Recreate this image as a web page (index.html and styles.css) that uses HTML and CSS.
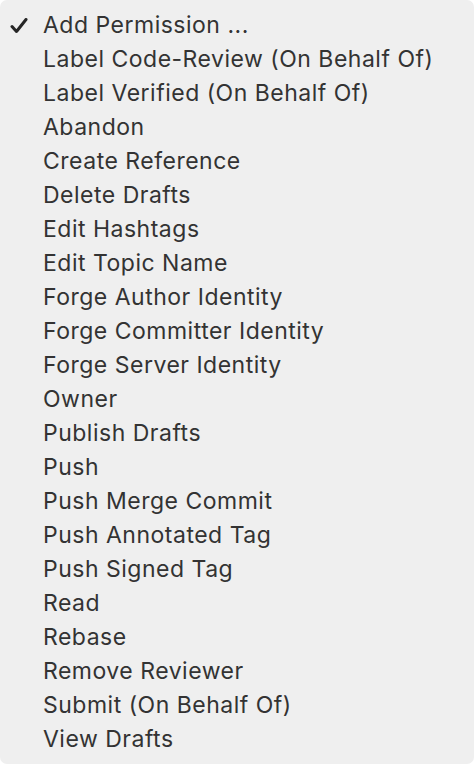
FILE: index.html
```html
<!DOCTYPE html>
<html lang="en">
<head>
  <meta charset="UTF-8">
  <title>Permissions menu</title>
  <link rel="stylesheet" href="styles.css">
</head>
<body>

<ul class="menu">
  <li class="item checked">
    <svg class="check" width="18" height="16" viewBox="0 0 18 16"><path d="M2 8.5 L6.5 13.5 L16 1.5" fill="none" stroke="#262626" stroke-width="3" stroke-linecap="round" stroke-linejoin="round"/></svg>
    Add Permission ...
  </li>
  <li class="item">Label Code-Review (On Behalf Of)</li>
  <li class="item">Label Verified (On Behalf Of)</li>
  <li class="item">Abandon</li>
  <li class="item">Create Reference</li>
  <li class="item">Delete Drafts</li>
  <li class="item">Edit Hashtags</li>
  <li class="item">Edit Topic Name</li>
  <li class="item">Forge Author Identity</li>
  <li class="item">Forge Committer Identity</li>
  <li class="item">Forge Server Identity</li>
  <li class="item">Owner</li>
  <li class="item">Publish Drafts</li>
  <li class="item">Push</li>
  <li class="item">Push Merge Commit</li>
  <li class="item">Push Annotated Tag</li>
  <li class="item">Push Signed Tag</li>
  <li class="item">Read</li>
  <li class="item">Rebase</li>
  <li class="item">Remove Reviewer</li>
  <li class="item">Submit (On Behalf Of)</li>
  <li class="item">View Drafts</li>
</ul>

</body>
</html>
```
FILE: styles.css
```css
body {
  margin: 0;
  padding: 0;
  background: #ffffff;
}
.menu {
  list-style: none;
  margin: 0;
  padding: 8px 0 0 0;
  width: 474px;
  height: 764px;
  box-sizing: border-box;
  background: #efefef;
  border-radius: 7px;
  font-family: Inter, "Liberation Sans", Arial, sans-serif;
  font-size: 23px;
  letter-spacing: 0.5px;
  color: #333333;
}
.item {
  position: relative;
  height: 34px;
  line-height: 34px;
  padding-left: 43px;
  white-space: nowrap;
}
.check {
  position: absolute;
  left: 10px;
  top: 10px;
}
```
